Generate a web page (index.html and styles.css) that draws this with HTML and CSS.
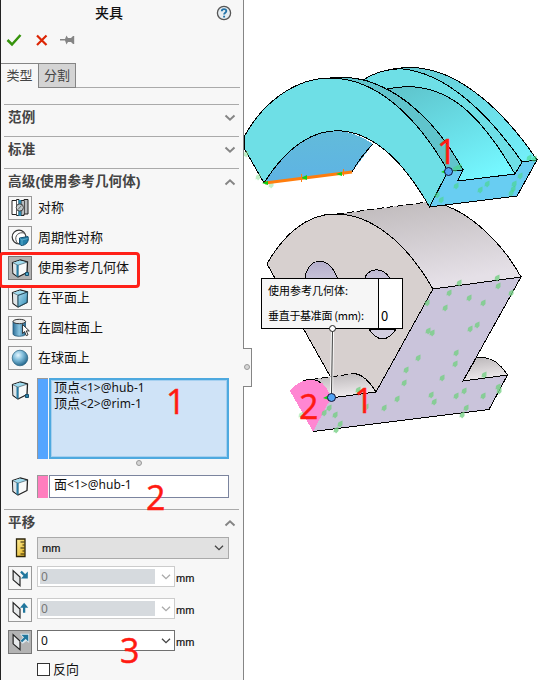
FILE: index.html
```html
<!DOCTYPE html>
<html lang="zh-CN">
<head>
<meta charset="utf-8">
<title>夹具</title>
<link rel="stylesheet" href="styles.css">
</head>
<body>
<svg class="defs" width="0" height="0">
  <defs>
    <linearGradient id="blueFace" x1="0" y1="0" x2="1" y2="1"><stop offset="0" stop-color="#b4dff2"/><stop offset="1" stop-color="#2f8cb5"/></linearGradient>
    <linearGradient id="cyl" x1="0" x2="1"><stop offset="0" stop-color="#2c6e98"/><stop offset=".5" stop-color="#8cc6e2"/><stop offset="1" stop-color="#276a94"/></linearGradient>
    <radialGradient id="ball" cx=".38" cy=".32" r=".7"><stop offset="0" stop-color="#e4f6ff"/><stop offset=".45" stop-color="#80bddb"/><stop offset="1" stop-color="#22658b"/></radialGradient>
    <linearGradient id="gold" x1="0" y1="0" x2="1" y2="1"><stop offset="0" stop-color="#fff0a0"/><stop offset="1" stop-color="#e0ae18"/></linearGradient>
    <symbol id="chev" viewBox="0 0 12 8"><path d="M1.500 1.500 6 5.700l4.500-4.200" fill="none" stroke="currentColor" stroke-width="2"/></symbol>
    <symbol id="chevThin" viewBox="0 0 12 8"><path d="M2 1.700 6 5.700l4-4" fill="none" stroke="currentColor" stroke-width="1.300"/></symbol>
    <symbol id="cube" viewBox="0 0 22 22">
      <path d="M3.500 5.500 11 3l7.500 2-.5 10.500L9 20l-5-3.500z" fill="#f7f9fa" stroke="#222" stroke-width="1.300" stroke-linejoin="round"/>
      <path d="M4.300 5.700 11 3.500l6.700 1.700L9 8z" fill="#a0dcf0"/>
      <path d="M4 6l5 2.300v11.200L4.500 16z" fill="#dfe5e8"/>
      <path d="M3.700 5.700 9 8.200l9-3M9 8.200V19.500" fill="none" stroke="#4e6a75" stroke-width=".8"/>
    </symbol>
    <symbol id="plane" viewBox="0 0 24 24"><path d="M4.500 4 12 11v9.500L4.500 14z" fill="#e7e9ea" stroke="#222" stroke-width="1.300"/></symbol>
  </defs>
</svg>

<div class="app">
  <aside class="panel">
    <header class="title"><h1>夹具</h1>
      <svg class="help" viewBox="0 0 16 16"><circle cx="8" cy="8" r="6.600" fill="#e6edf1" stroke="#555" stroke-width="1.300"/><path d="M5.800 6.300c0-3 4.500-2.800 4.500-.3 0 1.700-2.200 1.600-2.200 3.500M8.100 10.800v1.600" fill="none" stroke="#2373a8" stroke-width="1.900"/></svg>
    </header>
    <div class="actions">
      <svg width="16" height="14" viewBox="0 0 16 14"><path d="M1.500 7 6 11.500 14.500 2" fill="none" stroke="#36930c" stroke-width="2.500"/></svg>
      <svg width="14" height="14" viewBox="0 0 14 14"><path d="m2 2.500 9.500 9.500m0-9.500L2 12" fill="none" stroke="#dc2504" stroke-width="2.200"/></svg>
      <svg width="16" height="14" viewBox="0 0 16 14"><path d="M0 6h5l1.500-3.500L8 5h3l2-2h1.200v8H13l-2-2H8l-1.500 2.500L5 7.500H0z" fill="#858585"/></svg>
    </div>
    <nav class="tabs"><span class="tab on">类型</span><span class="tab">分割</span><i></i></nav>

    <section class="group closed"><h2>范例</h2><svg class="chev"><use href="#chev"/></svg></section>
    <section class="group closed"><h2>标准</h2><svg class="chev"><use href="#chev"/></svg></section>
    <section class="group"><h2>高级(使用参考几何体)</h2><svg class="chev up"><use href="#chev"/></svg></section>

    <ul class="types">
      <li><span class="btn"><svg viewBox="0 0 22 22"><path d="M3 3.500h4.500v-1H10v16H7.500v-1H3z" fill="#fff" stroke="#222"/><path d="M12 3.500h3v-1h4V17h-4v1.500h-3z" fill="#b9bdc0" stroke="#222"/><path d="M9.500 3h2.700v16H9.500z" fill="#2b88ae"/><path d="M7.500 3.500v14M15.500 3.500v14" fill="none" stroke="#333" stroke-width=".8"/><circle cx="10.800" cy="10.500" r="3.600" fill="#cbd0d2" fill-opacity=".9" stroke="#444"/><path d="M9 12.500 12.500 8.500" stroke="#555" stroke-width=".8"/></svg></span><span class="name">对称</span></li>
      <li><span class="btn"><svg viewBox="0 0 22 22"><circle cx="10" cy="10" r="6.800" fill="#fff" stroke="#333" stroke-width="1.200"/><path d="M9 17C4 11 8 5 14 5.800c1.500.3 2.500 1.500 3 3" fill="none" stroke="#555"/><path d="m10.500 11 8.500-1.500c1.500 5-2 9-7 9l-1.500-1.500z" fill="#2480aa" stroke="#165071"/><path d="m11 11.500 2 1.500 5.500-1.500M13 13v5" fill="none" stroke="#6bbad6" stroke-width=".8"/></svg></span><span class="name">周期性对称</span></li>
      <li><span class="btn pressed"><svg viewBox="0 0 22 22"><use href="#cube"/><path d="M8.500 8v11.500" stroke="#277ca4" stroke-width="2"/><path d="M16.500 15.500h3v3h-3z" fill="#4aa7cb" stroke="#174f6d"/></svg></span><span class="name">使用参考几何体</span></li>
      <li><span class="btn"><svg viewBox="0 0 22 22"><use href="#cube"/><path d="M9 8.500 18.500 5 18 15.500 9 20z" fill="url(#blueFace)" stroke="#234b5d"/></svg></span><span class="name">在平面上</span></li>
      <li><span class="btn"><svg viewBox="0 0 22 22"><path d="M4 4.500V17c0 3 12.500 3 12.500 0V4.500z" fill="url(#cyl)" stroke="#255979" stroke-width=".8"/><ellipse cx="10.300" cy="4.500" rx="6.300" ry="2.200" fill="#e6e6e6" stroke="#333"/><path d="m13.500 7.500.1 9 2-2 1.600 4.200 1.800-.8-1.700-4h3z" fill="#fff" stroke="#222" stroke-width=".9"/></svg></span><span class="name">在圆柱面上</span></li>
      <li><span class="btn"><svg viewBox="0 0 22 22"><circle cx="11" cy="11" r="7.800" fill="url(#ball)" stroke="#255e7c" stroke-width=".7"/></svg></span><span class="name">在球面上</span></li>
    </ul>

    <div class="pick vertices">
      <svg class="pickicon" viewBox="0 0 22 22"><use href="#cube"/><path d="M8.500 8v11.500" stroke="#277ca4" stroke-width="2"/><path d="M16.500 15.500h3v3h-3z" fill="#2f86ab" stroke="#174f6d"/></svg>
      <span class="swatch"></span>
      <div class="list"><p>顶点<b>&lt;1&gt;@hub-1</b></p><p>顶点<b>&lt;2&gt;@rim-1</b></p></div>
    </div>
    <div class="grip"><i></i></div>
    <div class="pick face">
      <svg class="pickicon" viewBox="0 0 22 22"><use href="#cube"/><path d="M8.500 8v11.500" stroke="#277ca4" stroke-width="2"/></svg>
      <span class="swatch"></span>
      <div class="list"><p>面<b>&lt;1&gt;@hub-1</b></p></div>
    </div>

    <section class="group trans"><h2>平移</h2><svg class="chev up"><use href="#chev"/></svg></section>
    <div class="units">
      <svg width="12" height="20" viewBox="0 0 12 20"><path d="M1.500 1h8.500v17.500H1.500z" fill="url(#gold)" stroke="#2d250b" stroke-width="1.300"/><path d="M5.500 4h4M7.500 7h2M5.500 10h4M7.500 13h2M5.500 16h4" stroke="#2d250b"/></svg>
      <div class="select"><span>mm</span><svg class="arrow"><use href="#chevThin"/></svg></div>
    </div>
    <div class="offset off"><span class="btn"><svg viewBox="0 0 24 24"><use href="#plane"/><path d="m13 5 5 5" stroke="#20769d" stroke-width="2.500"/><path d="M20.500 5v7.500H13z" fill="#20769d"/></svg></span><div class="combo"><span>0</span><svg class="arrow"><use href="#chevThin"/></svg></div><em>mm</em></div>
    <div class="offset off"><span class="btn"><svg viewBox="0 0 24 24"><use href="#plane"/><path d="M16.500 8v7" stroke="#20769d" stroke-width="2.500"/><path d="m16.500 4 4.500 5.500h-9z" fill="#20769d"/></svg></span><div class="combo"><span>0</span><svg class="arrow"><use href="#chevThin"/></svg></div><em>mm</em></div>
    <div class="offset"><span class="btn pressed"><svg viewBox="0 0 24 24"><use href="#plane"/><path d="M12 3h10v10l-3-2-4 3-3-3 3-4z" fill="#dceaf1"/><path d="m13.500 11.500 5-5" stroke="#20769d" stroke-width="2.500"/><path d="M13.500 4H21v7.500z" fill="#20769d"/></svg></span><div class="combo"><span>0</span><svg class="arrow"><use href="#chevThin"/></svg></div><em>mm</em></div>
    <label class="reverse"><i></i>反向</label>
  </aside>

  <svg class="scene" viewBox="244 0 299 680">
    <defs>
      <linearGradient id="rimOut" x1="0" y1="0" x2="1" y2="1"><stop offset="0" stop-color="#62c3cc"/><stop offset=".4" stop-color="#69d8e2"/><stop offset="1" stop-color="#75f4ff"/></linearGradient>
      <linearGradient id="rimGroove" x1=".1" y1="0" x2=".7" y2="1"><stop offset="0" stop-color="#5ec4cc"/><stop offset=".6" stop-color="#6be2eb"/><stop offset="1" stop-color="#75f7ff"/></linearGradient>
      <linearGradient id="rimIn" x1="0" y1="0" x2="0" y2="1"><stop offset="0" stop-color="#62bbda"/><stop offset="1" stop-color="#5eb3e4"/></linearGradient>
      <linearGradient id="hubTop" x1="0" y1="0" x2=".35" y2="1"><stop offset="0" stop-color="#bdb8b9"/><stop offset="1" stop-color="#e5e0e7"/></linearGradient>
      <linearGradient id="hole" x1="0" y1="0" x2="0" y2="1"><stop offset="0" stop-color="#b4aeca"/><stop offset="1" stop-color="#dedbe8"/></linearGradient>
      <linearGradient id="shaft" x1="0" y1="0" x2=".25" y2="1"><stop offset="0" stop-color="#b8b4b6"/><stop offset="1" stop-color="#eeeaec"/></linearGradient>
      <path id="g" d="M-1-2 2.500-3.500V-.5L2.500 1 0 3.500-1 2-2.500 2.500-2-1z"/>
    </defs>

    <g class="edge">
      <path class="bare" d="M337 214 428 202C462 204 500 239 521 277L433 289C405 242 375 215 337 214z" fill="url(#hubTop)"/>
      <path d="M267 264C283 235 307 214 335 214 373 214 407 244 433 289L376 392 330 376z" fill="#d7d0cf"/>
      <path d="M337 214 428 202" stroke-dasharray="7 3" fill="none"/>
      <path d="M428 202C462 204 500 239 521 277" fill="none"/>
      <path d="M305 277C310 256 328 256 337 277V300H305zM365 277C370 268 382 267 389 277V300H365z" fill="url(#hole)"/>
      <path d="M369 329C377 342 388 342 396 329z" fill="#d2cedf"/>
      <path d="M463 381 476.500 357.500C491 356 500 363 507.500 375z" fill="url(#shaft)"/>
      <path d="M311 379.500 355 373.500C364 375 370 382 376 392L331 398z" class="bare" fill="url(#shaft)"/>
      <path d="M311 379.500 355 373.500" stroke-dasharray="7 3" fill="none"/><path d="M355 373.500C364 375 370 382 376 392" fill="none"/>
      <path class="bare" d="M433 289 521 277 463 381 507.500 375 489 409.500 313 431.500 331 398 376 392z" fill="#cac4db"/>
      <path d="M331 398 376 392 433 289 521 277 463 381 507.500 375 489 409.500 313 431.500" fill="none"/>
      <path class="bare" d="M290 391C302 376 323 372 331 398L313 431.500z" fill="#ff86d2"/>
      <path d="M303 381Q312 376.500 321 383" fill="none"/>
    </g>

    <g class="edge">
      <path class="bare" d="M264 183C292 130 334 117 373 144L352 172z" fill="url(#rimIn)"/>
      <path d="M373 144Q361 156 352 172" fill="none"/>
      <path d="M364 79.500C378 71 394 67.500 410 67.500 460 67.500 506 114 537 160L522 162 515 174 457 181 387 89z" fill="url(#rimOut)"/>
      <path d="M364 79.500C378 71 386 70 400 68.700 447 72 490 116 522 162L515 174 388 90z" fill="#6edfe6"/>
      <path d="M387 89C447 76 483 119 515 174L457.500 181 463 170C440 130 416 104 387 89z" fill="url(#rimGroove)"/>
      <path d="M330 78C385 71 435 118 463 170L448 172C420 122 380 78 330 78z" fill="#60c4cc"/>
      <path d="M244 137C262 103 295 78 330 78 380 78 420 122 448 171L429.500 207C376 113 312 107 264 183L244 148z" fill="#6edfe6"/>
      <path d="M448 171.500 463 170 457.500 181 515 174 522 162 537 160 517 196 429.500 207z" fill="#68cdf2"/>
    </g>

    <g fill="#47d783" fill-opacity=".6">
      <use href="#g" x="455" y="169"/><use href="#g" x="459" y="167"/><use href="#g" x="529" y="158"/><use href="#g" x="534" y="159"/><use href="#g" x="456" y="186"/><use href="#g" x="487" y="184"/><use href="#g" x="480" y="190"/><use href="#g" x="514" y="184"/><use href="#g" x="520" y="176"/><use href="#g" x="511" y="193"/><use href="#g" x="437" y="195"/><use href="#g" x="441" y="200"/><use href="#g" x="513" y="189"/>
    </g>
    <g fill="#75cf85" fill-opacity=".8">
      <use href="#g" x="459" y="283"/><use href="#g" x="497" y="278"/><use href="#g" x="449" y="293"/><use href="#g" x="498" y="286"/><use href="#g" x="469" y="298"/><use href="#g" x="511" y="293"/><use href="#g" x="427" y="303"/><use href="#g" x="445" y="308"/><use href="#g" x="483" y="303"/><use href="#g" x="477" y="325"/><use href="#g" x="470" y="329"/><use href="#g" x="428" y="331"/><use href="#g" x="432" y="333"/><use href="#g" x="418" y="358"/><use href="#g" x="456" y="353"/><use href="#g" x="455" y="364"/><use href="#g" x="406" y="370"/><use href="#g" x="404" y="383"/><use href="#g" x="442" y="378"/><use href="#g" x="431" y="395"/><use href="#g" x="434" y="402"/><use href="#g" x="456" y="396"/><use href="#g" x="464" y="391"/><use href="#g" x="483" y="396"/><use href="#g" x="397" y="399"/><use href="#g" x="384" y="408"/><use href="#g" x="484" y="375"/><use href="#g" x="498" y="387"/><use href="#g" x="499" y="391"/><use href="#g" x="466" y="408"/><use href="#g" x="462" y="415"/><use href="#g" x="358" y="390"/><use href="#g" x="366" y="407"/><use href="#g" x="329" y="408"/><use href="#g" x="335" y="415"/><use href="#g" x="340" y="424"/><use href="#g" x="336" y="430"/><use href="#g" x="324" y="413"/>
    </g>
    <g fill="#8fe39b" fill-opacity=".55"><use href="#g" x="246" y="154"/><use href="#g" x="258" y="177"/><use href="#g" x="271" y="185"/><use href="#g" x="301" y="415"/></g>
    <path d="M265 183 352 172" stroke="#ff7d0d" stroke-width="3"/>
    <path d="m262 183 6-2v4zM301 178l6-3v5zM336 174l6-2v4zM441 172l6-3v5zM323 398l6-3v5z" fill="#14cf14"/>
    <path d="M301.500 174v8M343.500 169v7" stroke="#ff7d0d"/>

    <path d="M332.500 329 331.500 397" stroke="#fff" stroke-width="3"/><path d="M332.500 329 331.500 397" stroke="#333"/>
    <rect x="261.500" y="278.500" width="141" height="50" fill="#fff" stroke="#000"/>
    <path d="M262 279H378V328H262z" fill="#f6f6f6"/><path d="M378.500 278v51" stroke="#000"/>
    <circle cx="332.500" cy="328.500" r="3" fill="#fff" stroke="#222"/>
    <g class="note"><text x="268" y="295" textLength="80">使用参考几何体:</text><text x="268" y="320" textLength="96">垂直于基准面 (mm):</text><text x="381" y="320.500" class="zero">0</text></g>
    <circle cx="448.500" cy="171.500" r="4" fill="#51a3f5" stroke="#113"/>
    <circle cx="331.500" cy="397.500" r="4" fill="#51a3f5" stroke="#113"/>
    <g class="mark"><text x="437" y="164">1</text><text x="299" y="419">2</text><text x="354" y="413">1</text></g>
  </svg>

  <div class="handle"><i></i></div>
  <div class="frame"></div>
  <span class="mark m1">1</span><span class="mark m2">2</span><span class="mark m3">3</span>
</div>
</body>
</html>
```
FILE: styles.css
```css
* { box-sizing: border-box; margin: 0; padding: 0; }
body { width: 543px; height: 680px; overflow: hidden; background: #fff; color: #111; font: 13px/16px "Noto Sans", "Noto Sans CJK SC", sans-serif; }
i, em, b { font-style: normal; font-weight: normal; }
.defs { position: absolute; }
.app { position: relative; display: flex; height: 680px; }
.panel { width: 244px; height: 680px; background: #f7f7f7; border-left: 1px solid #222; border-right: 1px solid #858585; display: flex; flex-direction: column; flex: none; overflow: hidden; }
.scene { width: 299px; height: 680px; flex: none; }

.title { height: 26px; display: flex; align-items: center; padding: 0 11px 0 94px; justify-content: space-between; flex: none; }
.title h1 { font-size: 14px; font-weight: 500; line-height: 20px; }
.help { width: 16px; height: 16px; }
.actions { height: 37px; padding: 0 0 9px 5px; display: flex; gap: 13px; align-items: center; flex: none; }
.actions svg:last-child { margin-left: -2px; }
.tabs { height: 25px; display: flex; flex: none; margin-bottom: 16px; color: #444; }
.tab { width: 38px; border: 1px solid #858585; background: #d4d4d4; line-height: 22px; text-align: center; }
.tab.on { width: 37px; background: #f7f7f7; border-width: 1px 0 0; }
.tabs i { width: 164px; border-bottom: 1px solid #aaa; }

.group { height: 28px; margin: 0 4px 0 3px; border-top: 1px solid #aaa; padding: 0 3px 2px 4px; display: flex; align-items: center; justify-content: space-between; flex: none; }
.group.closed { height: 32px; padding-bottom: 6px; }
.group h2 { font-size: 13.500px; line-height: 18px; font-weight: 700; color: #444; font-family: "Liberation Sans", "Noto Sans CJK SC", sans-serif; letter-spacing: .2px; }
.chev { width: 12px; height: 8px; color: #858585; }
.up { transform: scaleY(-1); }

.types { list-style: none; padding-left: 7px; display: flex; flex-direction: column; gap: 6px; flex: none; }
.types li { height: 24px; display: flex; align-items: center; gap: 6px; }
.name { padding-bottom: 2px; }
.btn { width: 24px; height: 24px; border: 1px solid #999; background: #f7f7f7; flex: none; }
.btn svg { width: 22px; height: 22px; display: block; }
.pressed { background: #b3b3b3; border-color: #777; }

.pick { display: flex; padding-left: 8px; flex: none; }
.pickicon { width: 22px; height: 22px; margin-right: 6px; }
.swatch { width: 11px; margin-right: 1px; background: #54a5ff; border-top: 1px solid #999; border-left: 1px solid #999; }
.list { width: 180px; padding: 0 4px; border: 1px solid #7b849e; background: #fff; line-height: 16px; }
.list b { font-size: 12px; letter-spacing: .05px; }
.vertices { height: 81px; margin-top: 8px; }
.vertices .pickicon { margin-top: 1px; }
.vertices .list { border: 2px solid #4ea9df; background: #cfe3f7; padding: 0 3px; box-shadow: inset 0 0 0 1px #a5d0f0; }
.vertices p { height: 16px; position: relative; top: -1px; }
.grip { height: 16px; padding: 1px 0 0 135px; flex: none; }
.grip i, .handle i { display: block; width: 6px; height: 6px; border: 1px solid #999; border-radius: 50%; background: #d5d5d5; }
.face { height: 23px; margin-bottom: 11px; }
.face .swatch { background: #ff7dbe; }

.units { display: flex; height: 22px; padding-left: 14px; align-items: center; gap: 10px; flex: none; margin-bottom: 7px; }
.select { width: 192px; height: 22px; display: flex; align-items: center; justify-content: space-between; padding: 0 3px 0 4px; border: 1px solid #aaa; background: #e1e1e1; }
.select span, .offset em { font-size: 11px; font-family: "Liberation Sans", sans-serif; -webkit-text-stroke: .2px #111; }
.arrow { width: 12px; height: 8px; color: #444; }
.offset { height: 32px; display: flex; padding-left: 7px; flex: none; }
.combo { width: 138px; height: 21px; margin: 0 1px 0 5px; border: 1px solid #707070; background: #fff; display: flex; align-items: center; justify-content: space-between; padding: 0 2px; }
.combo span { width: 115px; height: 15px; padding-left: 1px; line-height: 15px; font-size: 12px; }
.offset em { padding-top: 4px; }
.off .combo { border-color: #ccc; }
.off .combo span { background: #d6dade; color: #777; }
.off .arrow { color: #aaa; }
.reverse { display: flex; align-items: center; height: 18px; padding-left: 36px; gap: 3px; flex: none; margin-top: -2px; }
.reverse i { width: 13px; height: 13px; border: 1px solid #333; background: #fff; }

.edge path { stroke: #000; stroke-width: 1; shape-rendering: crispEdges; }
.edge .bare { stroke: none; }
.note { font: 11px "Noto Sans CJK SC", sans-serif; }
.note .zero { font-size: 13px; }
.mark { font: 34px/34px "Open Sans", "Noto Sans", sans-serif; fill: #ff1a12; color: #ff1a12; stroke: #ff1a12; stroke-width: .5px; -webkit-text-stroke: .5px #ff1a12; }
span.mark { position: absolute; }
.m1 { left: 166px; top: 384px; }
.m2 { left: 146px; top: 480px; }
.m3 { left: 120px; top: 633px; }
.handle { position: absolute; left: 243px; top: 348px; width: 9px; height: 39px; background: #f7f7f7; border: 1px solid #858585; border-left: 0; padding: 15px 0 0 1px; }
.frame { position: absolute; left: -1px; top: 252px; width: 141px; height: 36px; border: 3px solid #ff2018; border-radius: 4px; }
```
